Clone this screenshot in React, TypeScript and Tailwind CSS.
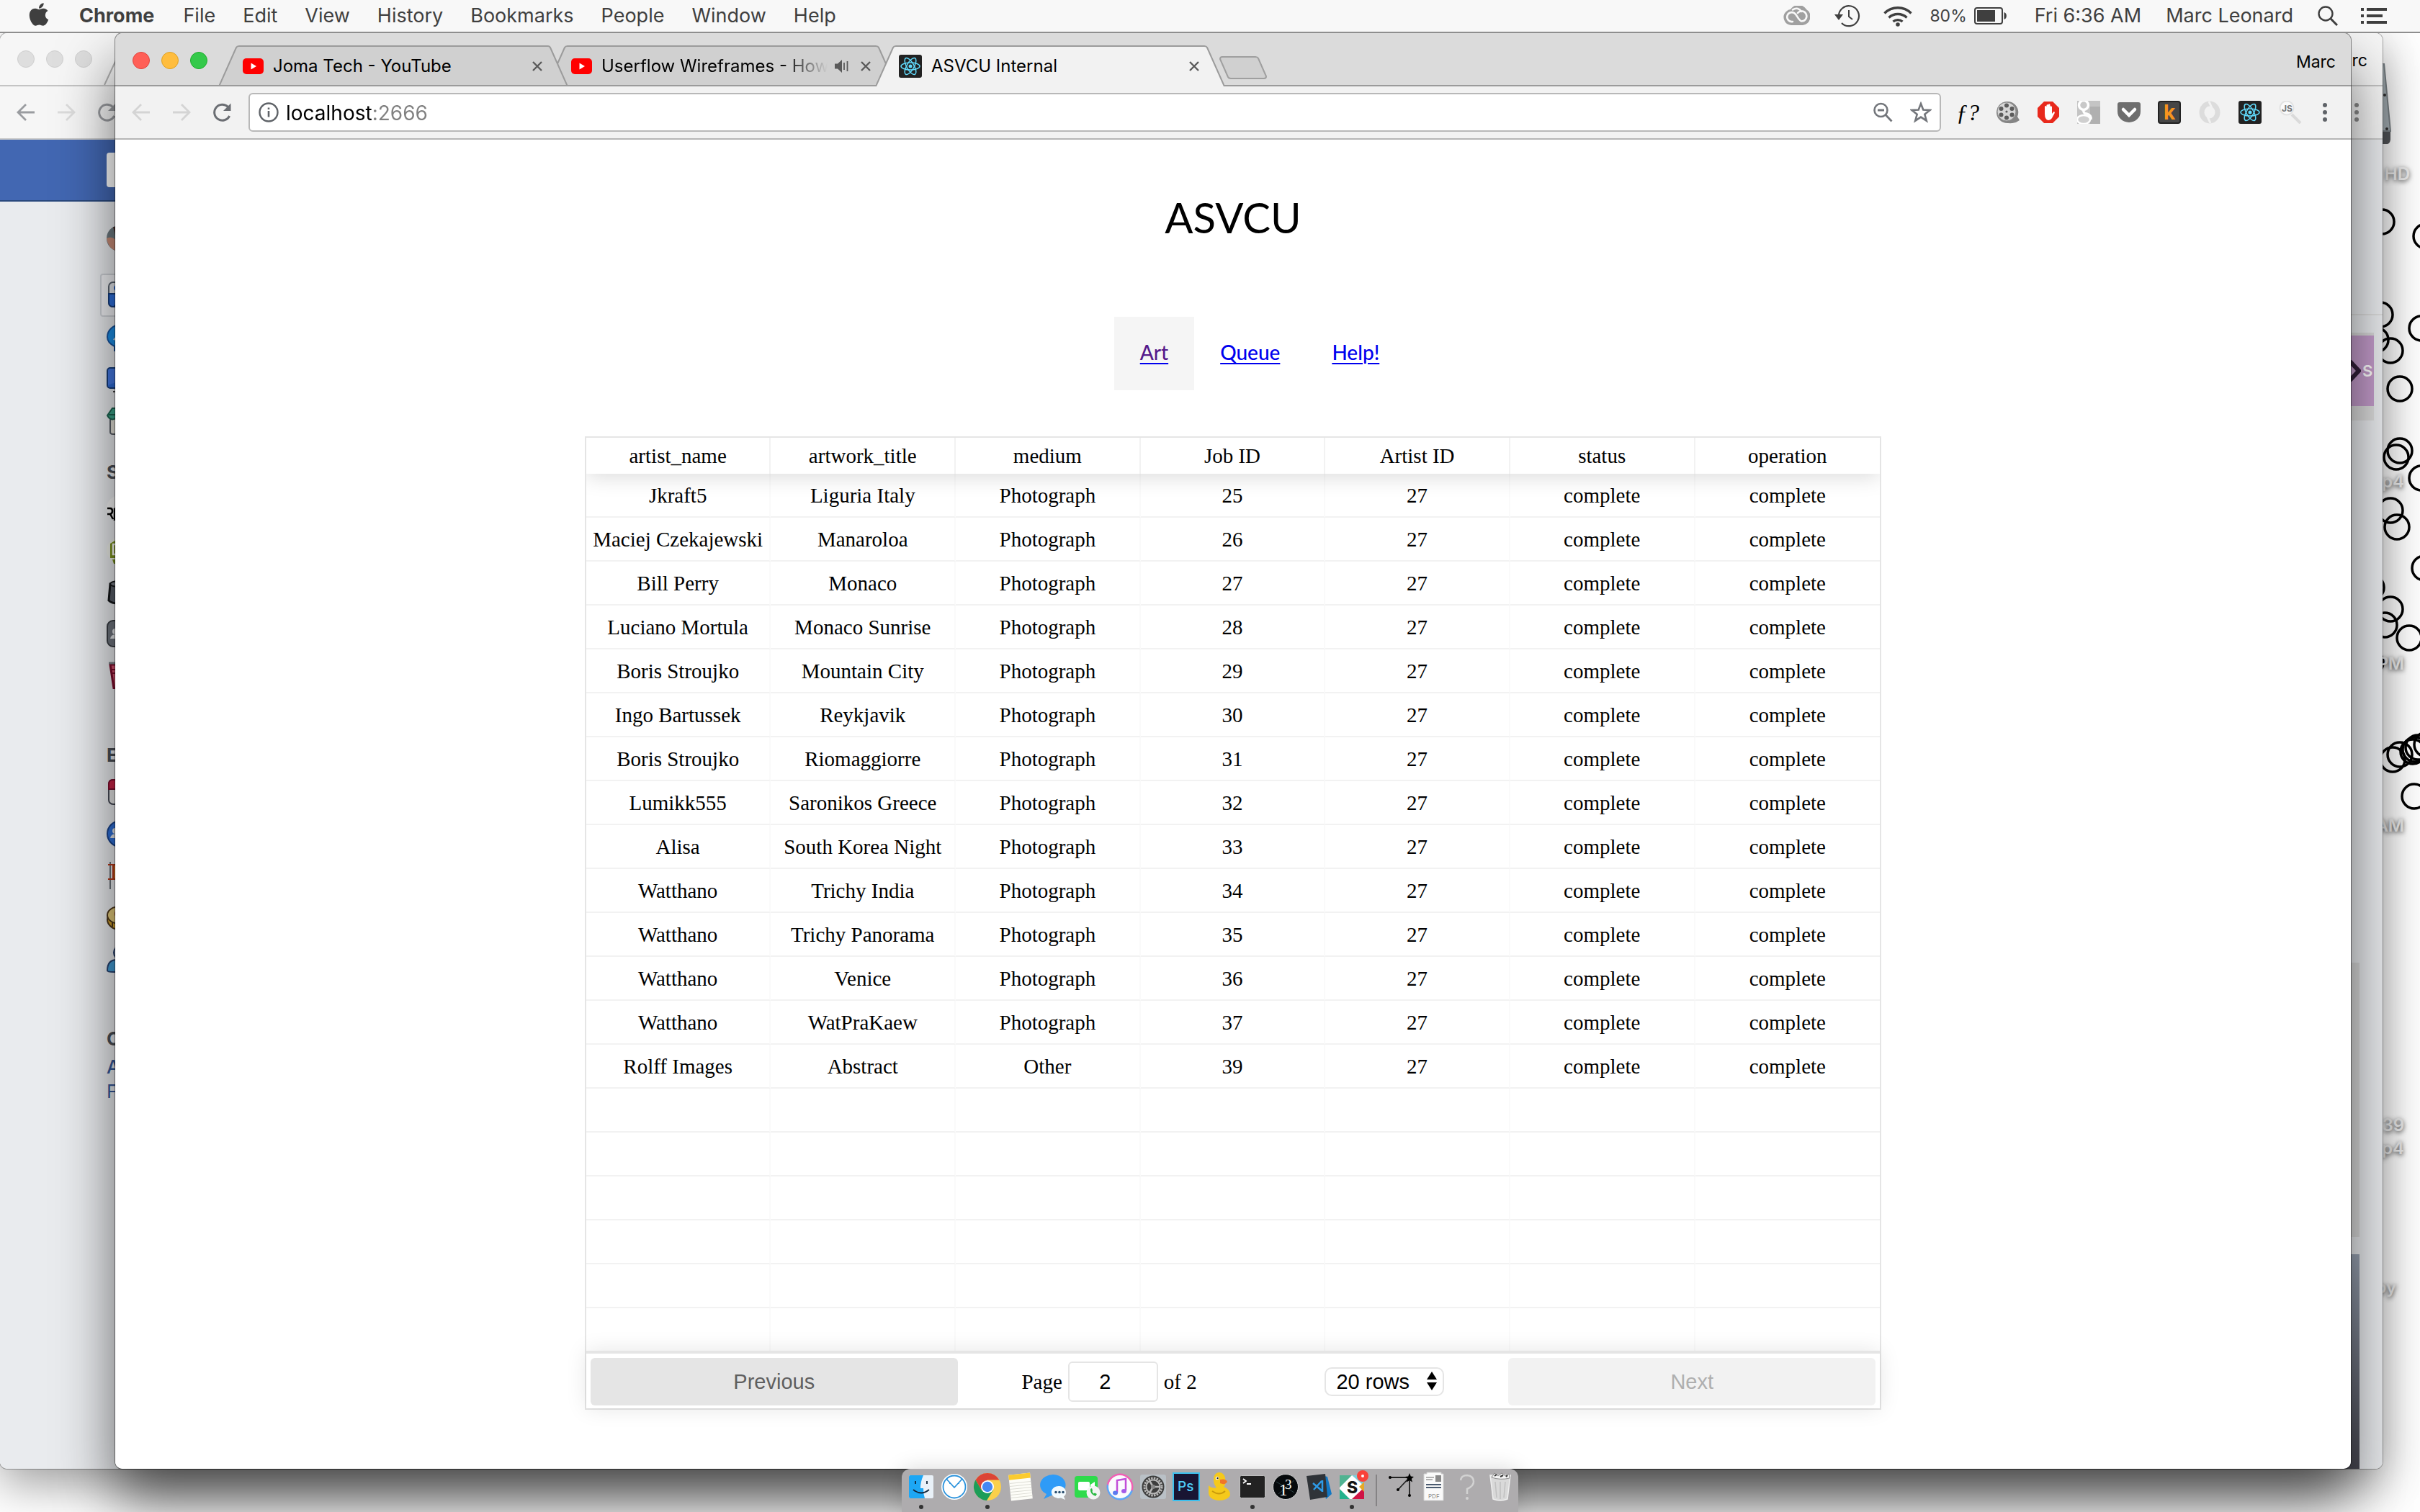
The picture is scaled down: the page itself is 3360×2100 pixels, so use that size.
import React from "react";
import { FaApple } from "react-icons/fa";

/* ---------- shared glyphs ---------- */

function ReactLogo({ className }: { className?: string }) {
  return (
    <svg viewBox="0 0 32 32" className={className} aria-hidden="true">
      <rect width="32" height="32" rx="3" fill="#222" />
      <g fill="none" stroke="#61dafb" strokeWidth="1.5">
        <ellipse cx="16" cy="16" rx="13" ry="5" />
        <ellipse cx="16" cy="16" rx="13" ry="5" transform="rotate(60 16 16)" />
        <ellipse cx="16" cy="16" rx="13" ry="5" transform="rotate(120 16 16)" />
      </g>
      <circle cx="16" cy="16" r="2.5" fill="#61dafb" />
    </svg>
  );
}

function YouTubeLogo({ className }: { className?: string }) {
  return (
    <svg viewBox="0 0 29 22" className={className} aria-hidden="true">
      <rect width="29" height="22" rx="5" fill="#f00" />
      <path d="M11.5 6.5 L19 11 L11.5 15.5 Z" fill="#fff" />
    </svg>
  );
}

function CloseGlyph() {
  return (
    <svg viewBox="0 0 14 14" className="size-3.5" aria-hidden="true">
      <path d="M1 1 L13 13 M13 1 L1 13" stroke="#5a5a5a" strokeWidth="2.4" fill="none" />
    </svg>
  );
}

function ArrowGlyph({ color, flip }: { color: string; flip?: boolean }) {
  return (
    <svg viewBox="0 0 26 26" className={flip ? "size-[26px] rotate-180" : "size-[26px]"} aria-hidden="true">
      <path d="M25 13 H2 M13 2 L2 13 L13 24" stroke={color} strokeWidth="2.8" fill="none" />
    </svg>
  );
}

function ReloadGlyph({ color }: { color: string }) {
  return (
    <svg viewBox="0 0 27 27" className="size-[27px]" aria-hidden="true">
      <path d="M23.6 18 A11 11 0 1 1 21.5 5.5" stroke={color} strokeWidth="3" fill="none" />
      <path d="M25.500 .5 V11 H15 Z" fill={color} />
    </svg>
  );
}

function DotsGlyph({ color }: { color: string }) {
  return (
    <svg viewBox="0 0 6 28" className="h-7 w-1.5" aria-hidden="true">
      <circle cx="3" cy="4" r="3" fill={color} />
      <circle cx="3" cy="14" r="3" fill={color} />
      <circle cx="3" cy="24" r="3" fill={color} />
    </svg>
  );
}

/* ---------- menu bar ---------- */

const menus = ["File", "Edit", "View", "History", "Bookmarks", "People", "Window", "Help"];

function MenuBar() {
  return (
    <header className="absolute inset-x-0 top-0 z-40 flex h-[46px] items-center justify-between border-b-2 border-[#8e8e8e] bg-[#f8f8f8] pl-10 pr-[46px] text-[27px] leading-8 text-[#3f3f3f]">
      <nav className="flex items-center gap-[38px]">
        <FaApple className="-mt-1 mr-1 h-9 w-[28px]" />
        <button className="mr-0.5 font-bold">Chrome</button>
        {menus.map((m) => (
          <button key={m}>{m}</button>
        ))}
      </nav>
      <div className="flex items-center">
        <svg viewBox="0 0 38 28" className="h-7 w-[38px]" aria-label="Creative Cloud">
          <path d="M12 27 A11 11 0 0 1 5 8 Q8 5 11 5 A13 13 0 0 1 33 5 A12 12 0 0 1 28 27 Z" fill="#a0a0a0" />
          <g fill="none" stroke="#f8f8f8" strokeWidth="2.6" strokeLinecap="round">
            <path d="M14 22 A6.500 6.500 0 1 1 16 10 C20 12 21 19 26 21.500 A7 7 0 1 0 21 10" />
            <path d="M14 5.500 C19 2 24 4 26 8" />
          </g>
        </svg>
        <svg viewBox="0 0 36 32" className="ml-[34px] h-8 w-9" aria-label="Time Machine">
          <path d="M6 17 A14 14 0 1 1 10 26" fill="none" stroke="#3f3f3f" strokeWidth="2.200" />
          <path d="M0 14 H12 L6 22 Z" fill="#3f3f3f" />
          <path d="M20 8 V17 L25 21" fill="none" stroke="#3f3f3f" strokeWidth="2" />
        </svg>
        <svg viewBox="0 0 40 29" className="ml-8 h-[29px] w-10" aria-label="Wi-Fi">
          <g fill="none" stroke="#3f3f3f" strokeWidth="3.400">
            <path d="M1.500 10.500 A26 26 0 0 1 38.500 10.500" />
            <path d="M7.500 16.500 A18 18 0 0 1 32.500 16.500" />
            <path d="M13.500 22 A10 10 0 0 1 26.500 22" />
          </g>
          <circle cx="20" cy="26" r="2.800" fill="#3f3f3f" />
        </svg>
        <span className="ml-6 text-[23px]">80%</span>
        <svg viewBox="0 0 46 24" className="ml-2.5 h-6 w-[46px]" aria-label="Battery">
          <rect x="1" y="1" width="38" height="22" rx="3" fill="none" stroke="#3f3f3f" strokeWidth="2" />
          <rect x="4" y="4" width="25" height="16" fill="#3f3f3f" />
          <path d="M41.500 7 C46 8 46 16 41.500 17 Z" fill="#3f3f3f" />
        </svg>
        <span className="ml-[38px]">Fri 6:36 AM</span>
        <span className="ml-[34px]">Marc Leonard</span>
        <svg viewBox="0 0 28 28" className="ml-[34px] size-7" aria-label="Spotlight">
          <circle cx="11" cy="11" r="9.500" fill="none" stroke="#3f3f3f" strokeWidth="2.400" />
          <path d="M17.500 17.500 L27 27" stroke="#3f3f3f" strokeWidth="3" />
        </svg>
        <svg viewBox="0 0 36 22" className="ml-8 h-[22px] w-9" aria-label="Notification Center">
          <path d="M0 2 H4 M8 2 H36 M0 11 H4 M8 11 H30 M0 20 H4 M8 20 H36" stroke="#3f3f3f" strokeWidth="4" />
        </svg>
      </div>
    </header>
  );
}

/* ---------- desktop ---------- */

const rings = [
  [87, 108], [148, 128], [85, 237], [142, 256], [79, 272], [99, 287], [112, 340],
  [107, 435], [112, 426], [142, 464], [99, 509], [108, 532], [146, 589], [73, 616],
  [91, 668], [99, 646], [125, 686], [72, 720], [102, 855], [112, 848], [130, 844],
  [133, 841], [137, 838], [149, 834], [132, 906],
];

function Desktop() {
  return (
    <>
      <svg viewBox="0 0 140 1000" className="absolute right-0 top-[200px] h-[1000px] w-[140px]" aria-hidden="true">
        <g fill="none" stroke="#000" strokeWidth="3.500">
          {rings.map(([x, y]) => (
            <circle key={`${x}-${y}`} cx={x} cy={y} r="17" />
          ))}
        </g>
      </svg>
      <svg viewBox="0 0 60 116" className="absolute right-[40px] top-[88px] h-[116px] w-[60px]" aria-hidden="true">
        <path d="M10 0 H50 L59 94 H1 Z" fill="#a9b3b8" stroke="#7d8589" strokeWidth="2" />
        <path d="M1 95 H59 V106 Q58 112 54 112 H6 Q1 112 1 106 Z" fill="#55585b" />
        <circle cx="51" cy="44" r="2" fill="#333" />
        <circle cx="54" cy="91" r="2" fill="#333" />
      </svg>
      <div className="absolute right-0 top-[222px] text-right text-[24px] font-semibold leading-8 text-[#ebebeb] [text-shadow:0_2px_6px_rgba(0,0,0,0.7)]">
        <p className="absolute right-[14px] top-[4px]">HD</p>
        <p className="absolute right-[22px] top-[431px]">mp4</p>
        <p className="absolute right-[22px] top-[684px]">PM</p>
        <p className="absolute right-[22px] top-[909px]">AM</p>
        <p className="absolute right-[22px] top-[1325px]">39</p>
        <p className="absolute right-[22px] top-[1357px]">mp4</p>
        <p className="absolute right-[33px] top-[1550px]">py</p>
      </div>
    </>
  );
}

/* ---------- window behind ---------- */

const s = { fill: "none", strokeWidth: 2 };

const shortcuts: Record<string, React.ReactNode> = {
  avatar: (
    <>
      <circle cx="18" cy="18" r="18" fill="#6d7a80" />
      <path d="M0 18 Q8 14 14 22 L14 36 Q2 32 0 18Z" fill="#c98d78" />
      <path d="M9 2 H20 V14 H12Z" fill="#4a302c" />
    </>
  ),
  news: (
    <>
      <rect x="3" y="1" width="34" height="34" rx="6" fill="#e4e7ec" stroke="#5b6470" strokeWidth="2" />
      <path d="M3 17 H37 V29 Q37 35 31 35 H9 Q3 35 3 29Z" fill="#2e6fdc" stroke="#173d7c" strokeWidth="2" />
      <circle cx="14" cy="9" r="4" fill="#2e6fdc" />
      <path d="M10 35 L20 26" stroke="#173d7c" strokeWidth="2" />
    </>
  ),
  messenger: (
    <>
      <path d="M20 1 A18 17 0 0 0 1 18 Q1 26 11 31 V37 L18 33 Q37 34 38 18 A18 17 0 0 0 20 1Z" fill="#1b8ee6" stroke="#17539f" strokeWidth="2" />
      <path d="M10 22 L17 14 L22 19 L28 15" stroke="#fff" {...s} />
    </>
  ),
  watch: (
    <>
      <rect x="1" y="3" width="36" height="28" rx="4" fill="#4479e3" stroke="#163c7a" strokeWidth="2" />
      <path d="M2 27 L36 14 V30 H4Z" fill="#2d6bd6" />
      <path d="M9 36 H30" stroke="#444" strokeWidth="2" />
    </>
  ),
  market: (
    <>
      <path d="M5 15 V34 Q5 37 9 37 H34 V15Z" fill="#e5e3da" stroke="#5b6068" strokeWidth="2" />
      <path d="M8 1 H34 L38 11 Q34 18 28 15 Q20 20 14 14 Q6 20 1 11Z" fill="#3ba58a" stroke="#1d6350" strokeWidth="2" />
      <path d="M3 10 H38" stroke="#1d6350" strokeWidth="2" />
    </>
  ),
  brand: (
    <>
      <circle cx="18" cy="19" r="18" fill="#f4f4f4" />
      <path d="M1 19 H5 Q8 19 8 23 Q8 26 5 27 L9 34 M1 27 H5 M11 19 H17 M11 19 V36 M11 27 H16" fill="none" stroke="#000" strokeWidth="2.500" />
    </>
  ),
  campus: (
    <>
      <circle cx="18" cy="19" r="18" fill="#eef0ea" />
      <path d="M5 10 L18 2 V30 H5Z M8 32 H18 V38 H10Z" fill="#7c941f" />
      <path d="M16 11 H9 V25 H16" fill="none" stroke="#fff" strokeWidth="2.500" />
    </>
  ),
  mug: (
    <>
      <path d="M5 8 L3 31 Q8 36 20 35 L32 31 L30 6Z" fill="#595f69" stroke="#16181b" strokeWidth="3" />
      <ellipse cx="17" cy="8" rx="12" ry="4" fill="#777d86" stroke="#16181b" strokeWidth="2" />
    </>
  ),
  people: (
    <>
      <rect x="1" y="1" width="36" height="36" rx="8" fill="#6f757e" stroke="#3a3e44" strokeWidth="2" />
      <circle cx="12" cy="16" r="4" fill="#e6e8eb" />
      <path d="M5 26 Q6 20 13 20 H20 V26Z" fill="#e6e8eb" />
    </>
  ),
  cup: (
    <>
      <path d="M5 4 L10 37 H28 L33 4Z" fill="#d5526e" stroke="#7d0c2c" strokeWidth="3" />
      <path d="M7 11 H31 M8 16 H30" stroke="#7d0c2c" strokeWidth="2" />
      <path d="M3 2 H35" stroke="#7b8087" strokeWidth="3" />
    </>
  ),
  calendar: (
    <>
      <rect x="3" y="2" width="34" height="34" rx="6" fill="#e6e6e6" stroke="#474b57" strokeWidth="2" />
      <path d="M3 15 V8 Q3 2 9 2 H31 Q37 2 37 8 V15Z" fill="#c92347" stroke="#7d0c2c" strokeWidth="2" />
    </>
  ),
  groups: (
    <>
      <circle cx="19" cy="19" r="18" fill="#2f70d8" stroke="#1a438c" strokeWidth="2" />
      <circle cx="12" cy="15" r="4" fill="#e6e8eb" />
      <path d="M5 25 Q6 19 13 19 H20 V25Z" fill="#e6e8eb" />
    </>
  ),
  pages: (
    <>
      <path d="M5 0 V38" stroke="#6d737a" strokeWidth="2" />
      <rect x="9" y="4" width="22" height="20" fill="#e87524" stroke="#b5381a" strokeWidth="2" />
      <path d="M2 4 H34 M2 24 H34" stroke="#b5381a" strokeWidth="2" />
    </>
  ),
  coin: (
    <>
      <ellipse cx="18" cy="22" rx="17" ry="14" fill="#cd9d2a" stroke="#4b3518" strokeWidth="2" />
      <ellipse cx="18" cy="16" rx="17" ry="12" fill="#e3ca7b" stroke="#4b3518" strokeWidth="2" />
      <circle cx="17" cy="14" r="6" fill="#8b1436" />
      <path d="M8 25 V32" stroke="#4b3518" strokeWidth="2" />
    </>
  ),
  friends: (
    <>
      <ellipse cx="18" cy="10" rx="8" ry="9" fill="#b9c8dc" stroke="#26406e" strokeWidth="2" />
      <path d="M1 35 Q1 20 14 20 H24 V37 H10 Q1 37 1 35Z" fill="#429bd4" stroke="#26406e" strokeWidth="2" />
    </>
  ),
};

function Shortcut({ name }: { name: string }) {
  return (
    <li className="flex h-[58px] items-center">
      <svg viewBox="0 0 38 38" className="size-[38px]" aria-hidden="true">
        {shortcuts[name]}
      </svg>
    </li>
  );
}

function BackWindow() {
  return (
    <section className="absolute bottom-[60px] left-0 right-[52px] top-[46px] flex flex-col overflow-hidden rounded-[10px] bg-[#e9ebee]">
      <div className="flex h-[74px] shrink-0 items-center border-b-2 border-[#c4c4c4] bg-[#f6f6f6] pl-6 pr-[21px]">
        <div className="flex gap-4">
          <span className="size-6 rounded-full border border-[#cfcfcf] bg-[#dedede]" />
          <span className="size-6 rounded-full border border-[#cfcfcf] bg-[#dedede]" />
          <span className="size-6 rounded-full border border-[#cfcfcf] bg-[#dedede]" />
        </div>
        <svg viewBox="0 0 30 57" className="ml-4 h-[57px] w-[30px] self-end" aria-hidden="true">
          <path d="M1 57 L27 1" stroke="#b0b0b0" strokeWidth="2" />
        </svg>
        <span className="ml-auto mt-1 text-[23px] leading-8">rc</span>
      </div>
      <div className="flex h-[74px] shrink-0 items-center gap-[30px] border-b-2 border-[#c9c9c9] bg-[#f6f6f6] pl-[23px] pr-[33px]">
        <ArrowGlyph color="#9a9ca0" />
        <ArrowGlyph color="#dcdcdc" flip />
        <ReloadGlyph color="#9a9ca0" />
        <span className="ml-auto">
          <DotsGlyph color="#8a8a8a" />
        </span>
      </div>
      <div className="mr-28 flex h-[86px] shrink-0 items-center border-b-2 border-[#29487d] bg-[#4267b2] pl-[148px]">
        <span className="h-12 w-96 rounded bg-white" />
      </div>
      <div className="flex min-h-0 flex-1 justify-between">
        <ul className="ml-[148px] flex w-80 flex-col pt-[23px]">
          <Shortcut name="avatar" />
          <li className="-ml-[9px] mt-[19px] flex h-[60px] items-center rounded border-2 border-[#cdd0d5] bg-[#f0f1f4] pl-[7px]">
            <svg viewBox="0 0 38 38" className="size-[38px]" aria-hidden="true">
              {shortcuts.news}
            </svg>
          </li>
          <Shortcut name="messenger" />
          <Shortcut name="watch" />
          <Shortcut name="market" />
          <li className="h-[63px] pt-[26px] text-[26px] font-bold leading-8 text-[#4b4f56]">Shortcuts</li>
          <Shortcut name="brand" />
          <Shortcut name="campus" />
          <Shortcut name="mug" />
          <Shortcut name="people" />
          <Shortcut name="cup" />
          <li className="h-[104px] pt-[66px] text-[26px] font-bold leading-8 text-[#4b4f56]">Explore</li>
          <Shortcut name="calendar" />
          <Shortcut name="groups" />
          <Shortcut name="pages" />
          <Shortcut name="coin" />
          <Shortcut name="friends" />
          <li className="h-[104px] pt-[66px] text-[26px] font-bold leading-8 text-[#4b4f56]">Create</li>
          <li className="text-[26px] font-medium leading-[34px] text-[#365899]">Ad</li>
          <li className="text-[26px] leading-[34px] text-[#365899]">Fundraiser</li>
        </ul>
        <div className="flex w-[112px] flex-col">
          <div className="h-[158px] border-b-2 border-[#dcdcdc]" />
          <div className="h-6" />
          <div className="mr-3 flex h-[102px] items-center gap-0.5 border-t-4 border-[#d8d8d8] bg-[#c39bca] pl-[58px]">
            <svg viewBox="0 0 24 30" className="h-[30px] w-6 shrink-0" aria-hidden="true">
              <path d="M8 1 L21 15 L8 29" fill="none" stroke="#33203a" strokeWidth="6" />
            </svg>
            <span className="text-[22px] font-semibold leading-8 text-white">S</span>
          </div>
          <div className="mr-3 h-5 bg-[#dcdcdc]" />
          <div className="mr-8 mt-[753px] h-[381px] bg-[#dadada]" />
          <div className="mr-8 mt-6 flex-1 bg-linear-to-b from-[#9aa4b4] to-[#484852]" />
        </div>
      </div>
    </section>
  );
}

/* ---------- browser window ---------- */

function Tab({
  title,
  icon,
  active,
  audio,
  stack,
}: {
  title: string;
  icon: React.ReactNode;
  active?: boolean;
  audio?: boolean;
  stack: string;
}) {
  return (
    <div className={`relative -mr-7 flex h-[57px] w-[484px] items-center ${stack}`}>
      <svg viewBox="0 0 484 57" preserveAspectRatio="none" className="absolute inset-0 size-full" aria-hidden="true">
        <path d="M0 57 L24 3 Q25 1 28 1 H456 Q459 1 460 3 L484 57 Z" fill={active ? "#f2f2f2" : "#d0d0d0"} />
        <path d="M0 57 L24 3 Q25 1 28 1 H456 Q459 1 460 3 L484 57" fill="none" stroke="#9b9b9b" strokeWidth="2" />
        {!active && <path d="M0 56 H484" stroke="#9b9b9b" strokeWidth="2" />}
      </svg>
      <button className="relative ml-8 flex min-w-0 flex-1 items-center text-left">
        {icon}
        <span
          className={
            audio
              ? "ml-[13px] w-[314px] overflow-hidden whitespace-nowrap bg-linear-to-r from-black from-80% to-transparent bg-clip-text text-[24px] leading-8 text-transparent"
              : "ml-[13px] whitespace-nowrap text-[24px] leading-8 text-black"
          }
        >
          {title}
        </span>
      </button>
      {audio && (
        <svg viewBox="0 0 20 18" className="relative mr-4 h-[18px] w-5 shrink-0" aria-label="Playing audio">
          <path d="M0 5.500 H4 L10 0 V18 L4 12.500 H0 Z" fill="#5a5a5a" />
          <path d="M13 4 V14 M17.500 2 V16" stroke="#5a5a5a" strokeWidth="1.800" />
        </svg>
      )}
      <button className="relative mr-[35px] shrink-0" aria-label={`Close ${title}`}>
        <CloseGlyph />
      </button>
    </div>
  );
}

function TabStrip() {
  return (
    <div className="flex h-[74px] shrink-0 items-end border-b-2 border-[#9b9b9b] bg-[#dbdbdb] pl-6 pr-[21px]">
      <div className="flex gap-4 pb-[22px]">
        <button aria-label="Close window" className="size-6 rounded-full border border-[#e0443e] bg-[#ff5f57]" />
        <button aria-label="Minimise window" className="size-6 rounded-full border border-[#dea123] bg-[#ffbd3e]" />
        <button aria-label="Zoom window" className="size-6 rounded-full border border-[#1dad2b] bg-[#34c94a]" />
      </div>
      <div className="-mb-0.5 ml-4 flex">
        <Tab title="Joma Tech - YouTube" icon={<YouTubeLogo className="ml-px h-[22px] w-[29px] shrink-0" />} stack="z-10" />
        <Tab
          title="Userflow Wireframes - How to"
          icon={<YouTubeLogo className="ml-px h-[22px] w-[29px] shrink-0" />}
          audio
          stack="z-0"
        />
        <Tab title="ASVCU Internal" icon={<ReactLogo className="size-8 shrink-0" />} active stack="z-20" />
      </div>
      <button aria-label="New tab" className="mb-[8px] ml-[21px]">
        <svg viewBox="0 0 66 32" className="h-8 w-[66px]" aria-hidden="true">
          <path d="M4 1 H50 Q53 1 54 3 L65 28 Q65 31 62 31 H16 Q13 31 12 29 L1 4 Q1 1 4 1Z" fill="#d0d0d0" stroke="#9f9f9f" strokeWidth="2" />
        </svg>
      </button>
      <button className="mb-4 ml-auto text-[23px] leading-8">Marc</button>
    </div>
  );
}

function Extensions() {
  return (
    <div className="flex items-center gap-6">
      <button aria-label="Font finder" className="w-8 whitespace-nowrap font-['Liberation_Serif',serif] text-[32px] font-medium italic leading-8">
        ƒ?
      </button>
      <svg viewBox="0 0 32 32" className="size-8" aria-label="Film reel">
        <path d="M14 1 A15 15 0 0 1 29 22 L32 27 Q26 32 16 31 A15 15 0 0 1 14 1Z" fill="#858585" />
        <circle cx="14" cy="15" r="13" fill="#d6d6d6" stroke="#8b8b8b" />
        <g fill="#5c5c5c">
          <circle cx="14" cy="6.500" r="3" /><circle cx="21.500" cy="11" r="3" /><circle cx="21.500" cy="19.500" r="3" />
          <circle cx="14" cy="23.500" r="3" /><circle cx="6.500" cy="19.500" r="3" /><circle cx="6.500" cy="11" r="3" />
          <circle cx="14" cy="15" r="1.600" />
        </g>
      </svg>
      <svg viewBox="0 0 32 32" className="size-8" aria-label="Ad blocker">
        <path d="M10 1 H22 L31 10 V22 L22 31 H10 L1 22 V10Z" fill="#e8291c" />
        <path d="M11 18 V8 Q12.300 6 13.500 8 V14 V6 Q14.800 4 16 6 V14 V5 Q17.300 3.500 18.500 5.500 V14 V8 Q19.800 6.500 21 8.500 V18 L23.500 15 Q25.500 15 24.500 17.500 L21 24 Q19 27 15.500 27 Q11 26 11 18Z" fill="#fff" />
      </svg>
      <svg viewBox="0 0 32 32" className="size-8" aria-label="Search assistant">
        <rect width="32" height="32" fill="#c4c4c4" />
        <path d="M18 8 H32 V32 H18Z" fill="#b0b0b0" />
        <circle cx="9" cy="6" r="6.500" fill="#c9c9c9" stroke="#fff" strokeWidth="3.500" />
        <path d="M9 13 Q8 17 13 18 Q20 20 19 26" stroke="#fff" strokeWidth="3.500" fill="none" />
        <ellipse cx="9" cy="26" rx="9" ry="6" fill="#cfcfcf" stroke="#fff" strokeWidth="2.500" />
      </svg>
      <svg viewBox="0 0 32 32" className="size-8" aria-label="Pocket">
        <path d="M3 2 H29 Q32 2 32 5 V15 A16 15 0 0 1 0 15 V5 Q0 2 3 2Z" fill="#6e6e6e" />
        <path d="M8 12 L16 20 L24 12" fill="none" stroke="#fff" strokeWidth="4.500" strokeLinecap="round" />
      </svg>
      <button aria-label="k extension" className="size-8 rounded border-2 border-[#222] bg-[#464646] text-[28px] font-bold leading-7 text-[#f7941e]">
        k
      </button>
      <svg viewBox="0 0 32 32" className="size-8" aria-label="Sync">
        <ellipse cx="16" cy="16" rx="11" ry="12" fill="none" stroke="#dcdcdc" strokeWidth="7" />
        <path d="M15 1 L19 10 M13 22 L17 31" stroke="#f2f2f2" strokeWidth="3" />
      </svg>
      <ReactLogo className="size-8" />
      <svg viewBox="0 0 32 32" className="size-8" aria-label="JS inspector">
        <circle cx="11" cy="10" r="9.500" fill="#fafafa" stroke="#e2e2e2" strokeWidth="2" />
        <path d="M18 19 L30 31" stroke="#dadada" strokeWidth="4" />
        <text x="4" y="15" fontSize="12" fontWeight="700" fill="#777">JS</text>
      </svg>
      <button aria-label="Browser menu" className="flex w-4 justify-center">
        <DotsGlyph color="#5f6368" />
      </button>
    </div>
  );
}

function Toolbar() {
  return (
    <div className="flex h-[74px] shrink-0 items-center border-b-2 border-[#b6b6b6] bg-[#f2f2f2] pl-[23px] pr-7">
      <div className="flex items-center gap-[30px]">
        <button aria-label="Back"><ArrowGlyph color="#d4d4d4" /></button>
        <button aria-label="Forward"><ArrowGlyph color="#d4d4d4" flip /></button>
        <button aria-label="Reload"><ReloadGlyph color="#6b6e73" /></button>
      </div>
      <div className="ml-[23px] mr-[21px] flex h-[54px] flex-1 items-center rounded-md border-2 border-[#b8b8b8] bg-white pl-3 pr-[11px]">
        <svg viewBox="0 0 28 28" className="size-7" aria-label="Site information">
          <circle cx="14" cy="14" r="12.500" fill="none" stroke="#5f6368" strokeWidth="2.400" />
          <path d="M14 12 V20.500 M14 7.500 V10" stroke="#5f6368" strokeWidth="2.600" />
        </svg>
        <input
          aria-label="Address"
          defaultValue="localhost:2666"
          className="ml-2.5 min-w-0 flex-1 bg-[linear-gradient(to_right,#000_122px,#808080_122px)] bg-clip-text pt-0.5 text-[28px] leading-9 text-transparent outline-none"
        />
        <button aria-label="Zoom level">
          <svg viewBox="0 0 28 28" className="size-7" aria-hidden="true">
            <circle cx="11.500" cy="11" r="9" fill="none" stroke="#73767b" strokeWidth="2.600" />
            <path d="M7 11 H16 M18 17.500 L26.500 26.500" stroke="#73767b" strokeWidth="2.800" />
          </svg>
        </button>
        <button aria-label="Bookmark this page" className="ml-6">
          <svg viewBox="0 0 30 30" className="size-[30px]" aria-hidden="true">
            <path d="M15 3 L18.300 11.500 L27.500 12 L20.300 17.800 L22.800 26.700 L15 21.600 L7.200 26.700 L9.700 17.800 L2.500 12 L11.700 11.500Z" fill="none" stroke="#73767b" strokeWidth="2.600" />
          </svg>
        </button>
      </div>
      <Extensions />
    </div>
  );
}

/* ---------- page ---------- */

const columns = ["artist_name", "artwork_title", "medium", "Job ID", "Artist ID", "status", "operation"];

const artworks: [string, string, string, number][] = [
  ["Jkraft5", "Liguria Italy", "Photograph", 25],
  ["Maciej Czekajewski", "Manaroloa", "Photograph", 26],
  ["Bill Perry", "Monaco", "Photograph", 27],
  ["Luciano Mortula", "Monaco Sunrise", "Photograph", 28],
  ["Boris Stroujko", "Mountain City", "Photograph", 29],
  ["Ingo Bartussek", "Reykjavik", "Photograph", 30],
  ["Boris Stroujko", "Riomaggiorre", "Photograph", 31],
  ["Lumikk555", "Saronikos Greece", "Photograph", 32],
  ["Alisa", "South Korea Night", "Photograph", 33],
  ["Watthano", "Trichy India", "Photograph", 34],
  ["Watthano", "Trichy Panorama", "Photograph", 35],
  ["Watthano", "Venice", "Photograph", 36],
  ["Watthano", "WatPraKaew", "Photograph", 37],
  ["Rolff Images", "Abstract", "Other", 39],
];

const rows: (string | number)[][] = [
  ...artworks.map((a) => [...a, 27, "complete", "complete"]),
  ...Array.from({ length: 6 }, () => columns.map(() => "")),
];

function ArtTable() {
  return (
    <div className="mt-16 w-[58%] border-2 border-[#e5e5e5] font-['Liberation_Serif',serif] text-[29px] leading-8 text-black">
      <table className="w-full table-fixed border-separate border-spacing-0">
        <thead className="relative shadow-[0_4px_30px_rgba(0,0,0,0.15)] [clip-path:inset(0_0_-40px_0)]">
          <tr>
            {columns.map((c) => (
              <th key={c} className="h-[50px] border-r-2 border-[#f2f2f2] p-0 text-center font-normal last:border-r-0">
                {c}
              </th>
            ))}
          </tr>
        </thead>
        <tbody>
          {rows.map((r, i) => (
            <tr key={i} className="group">
              {r.map((v, j) => (
                <td
                  key={j}
                  className="h-[61px] whitespace-nowrap border-b-2 border-r-2 border-b-[#f2f2f2] border-r-[#fafafa] p-0 text-center last:border-r-0 group-last:h-[59px] group-last:border-b-0"
                >
                  {v}
                </td>
              ))}
            </tr>
          ))}
        </tbody>
      </table>
      <div className="relative flex items-center border-t-4 border-[#e5e5e5] bg-white px-1.5 pb-1 pt-1.5 shadow-[0_0_30px_rgba(0,0,0,0.1)]">
        <button className="h-[66px] flex-1 rounded-md bg-[#e5e5e5] font-['Liberation_Sans',sans-serif] text-[#5f5f5f]">
          Previous
        </button>
        <div className="flex flex-[1.5] items-center justify-around">
          <label className="flex items-center gap-2">
            Page
            <input
              defaultValue="2"
              className="h-14 w-[125px] rounded-md border-2 border-[#e5e5e5] pr-[22px] text-center font-['Liberation_Sans',sans-serif]"
            />
            of 2
          </label>
          <div className="relative">
            <select
              aria-label="Rows per page"
              className="h-10 w-[166px] appearance-none rounded-[10px] border-2 border-[#e5e5e5] bg-white pl-3.5 font-['Liberation_Sans',sans-serif] leading-8"
            >
              <option>20 rows</option>
            </select>
            <svg viewBox="0 0 14 26" className="pointer-events-none absolute right-2.5 top-[6px] h-[26px] w-3.5" aria-hidden="true">
              <path d="M7 0 L14 11 H0Z M7 26 L14 15 H0Z" fill="#000" />
            </svg>
          </div>
        </div>
        <button disabled className="h-[66px] flex-1 rounded-md bg-[#f2f2f2] font-['Liberation_Sans',sans-serif] text-[#afafaf]">
          Next
        </button>
      </div>
    </div>
  );
}

function FrontWindow() {
  return (
    <section className="absolute bottom-[60px] left-[160px] right-[96px] top-[46px] flex flex-col overflow-hidden rounded-[10px]">
      <TabStrip />
      <Toolbar />
      <main className="flex flex-1 flex-col items-center bg-white">
        <h1 className="mt-[76px] font-['Lato',sans-serif] text-[58px] leading-16 text-black">ASVCU</h1>
        <nav className="mt-[106px] pl-[74px] font-['Lato',sans-serif] text-[28px] font-medium">
          <ul className="flex leading-[98px] text-[#0000ee] underline decoration-2 underline-offset-4">
            <li className="bg-[#f5f5f5] px-9 pb-1"><a href="#art" className="text-[#551a8b]">Art</a></li>
            <li className="px-9"><a href="#queue">Queue</a></li>
            <li className="px-9"><a href="#help">Help!</a></li>
          </ul>
        </nav>
        <ArtTable />
      </main>
    </section>
  );
}

/* ---------- dock ---------- */

function DockItem({ label, running, badge, children }: { label: string; running?: boolean; badge?: boolean; children: React.ReactNode }) {
  return (
    <button aria-label={label} className="relative flex h-[60px] w-[46px] flex-col items-center pt-1">
      <svg viewBox="0 0 40 42" className="h-[42px] w-10 shrink-0" aria-hidden="true">
        {children}
      </svg>
      {running && <span className="mt-1 size-1.5 rounded-full bg-[#333]" />}
      {badge && (
        <span className="absolute right-0 top-0.5 flex size-4 items-center justify-center rounded-full bg-[#f9423a]">
          <span className="size-1 rounded-full bg-white" />
        </span>
      )}
    </button>
  );
}

function Dock() {
  return (
    <footer className="absolute bottom-0 left-1/2 z-30 flex h-[60px] -translate-x-1/2 items-start rounded-t-xl bg-[#aeacae] pl-1 pr-0.5 shadow-[0_0_30px_rgba(0,0,0,0.15)]">
      <DockItem label="Finder" running>
        <rect x="3" y="5" width="34" height="32" rx="2" fill="#e9f1f8" />
        <path d="M5 5 H23 Q19 14 19 23 H23 Q23 31 25 37 H5 Q3 37 3 35 V7 Q3 5 5 5Z" fill="#1da7f5" />
        <path d="M12 13 V17 M28 13 V17 M9 25 Q20 34 31 25" fill="none" stroke="#12263a" strokeWidth="1.800" />
      </DockItem>
      <DockItem label="Mail">
        <circle cx="20" cy="21" r="18" fill="#fff" />
        <circle cx="20" cy="21" r="15.500" fill="none" stroke="#2a92dc" strokeWidth="1.800" />
        <path d="M9 10 L20 22 L31 10 M14 16 V17 M26 16 V17" fill="none" stroke="#2a92dc" strokeWidth="1.800" />
      </DockItem>
      <DockItem label="Chrome" running>
        <circle cx="20" cy="21" r="19" fill="#fbd04b" />
        <path d="M3.500 11.500 A19 19 0 0 1 36.500 11.500 H20 L12 26Z" fill="#dc4437" />
        <path d="M3.500 11.500 A19 19 0 0 0 19 40 L28 25.500 L12 26Z" fill="#1c9d58" />
        <circle cx="20" cy="21" r="9" fill="#fff" />
        <circle cx="20" cy="21" r="7.200" fill="#4587f3" />
      </DockItem>
      <DockItem label="Notes">
        <g transform="rotate(-6 20 21)">
          <rect x="5" y="3" width="30" height="36" fill="#fdfdf8" />
          <rect x="5" y="3" width="30" height="7" fill="#fbcb2f" />
          <path d="M5 15 H35 M5 19 H35 M5 23 H35 M5 27 H35 M5 31 H35 M5 35 H35" stroke="#dcdcd4" />
        </g>
      </DockItem>
      <DockItem label="Messages">
        <path d="M20 4 A18 14.500 0 0 0 10 31 L6 38 L17 33 A18 14.500 0 1 0 20 4Z" fill="#2f9bf7" />
        <path d="M28 20 A10 8.500 0 1 0 30 36.500 L36 39 L34 34.500 A10 8.500 0 0 0 28 20Z" fill="#f3fafe" />
        <circle cx="23" cy="28.500" r="1.800" fill="#2a4f70" /><circle cx="28" cy="28.500" r="1.800" fill="#2a4f70" /><circle cx="33" cy="28.500" r="1.800" fill="#2a4f70" />
      </DockItem>
      <DockItem label="FaceTime">
        <rect x="3" y="6" width="32" height="30" rx="4" fill="#2edb4b" />
        <rect x="8" y="14" width="16" height="12" rx="2" fill="#fff" />
        <path d="M25 18 L31 14 V25 L25 22Z" fill="#fff" />
        <circle cx="29" cy="29" r="9.500" fill="#f4f4f4" />
        <path d="M25 24 Q24 31 32 34 L34 31 L31 29.500 L29.500 30.500 Q27.500 29 27.500 27 L28 26 L27 23Z" fill="#2ab943" />
      </DockItem>
      <DockItem label="iTunes">
        <circle cx="20" cy="21" r="18.500" fill="#f15fb4" />
        <path d="M20 39.500 A18.500 18.500 0 0 1 2 17 Q10 30 38 26 A18.500 18.500 0 0 1 20 39.500Z" fill="#5ba9f5" />
        <circle cx="20" cy="21" r="16" fill="#fbfbfd" />
        <path d="M16 29 V12 L28 10 V26" fill="none" stroke="#c14ed8" strokeWidth="2.500" />
        <ellipse cx="13.500" cy="29.500" rx="3.500" ry="3" fill="#5a7bf0" /><ellipse cx="25.500" cy="27" rx="3.500" ry="3" fill="#a35be8" />
      </DockItem>
      <DockItem label="System Preferences">
        <rect x="2" y="4" width="36" height="34" rx="3" fill="#b9c0c6" />
        <circle cx="20" cy="21" r="15.500" fill="#3d3d3d" />
        <circle cx="20" cy="21" r="12" fill="none" stroke="#b8b8b8" strokeWidth="3" strokeDasharray="2.500 1.300" />
        <circle cx="20" cy="21" r="9.500" fill="none" stroke="#b8b8b8" strokeWidth="2" />
        <path d="M20 21 H30 M20 21 L15 12.500 M20 21 L15 29.500" stroke="#b8b8b8" strokeWidth="2.500" />
        <circle cx="20" cy="21" r="3" fill="#888" />
      </DockItem>
      <DockItem label="Photoshop">
        <rect x="2" y="2" width="36" height="38" fill="#191533" stroke="#3cc0ee" strokeWidth="2" />
        <text x="8" y="27" fontSize="19" fontWeight="500" fill="#4fcdf8">Ps</text>
      </DockItem>
      <DockItem label="Cyberduck">
        <path d="M5 19 Q10 24 16 22 Q12 18 12 11 A8 9 0 0 1 28 9 Q30 17 26 21 Q36 25 35 33 Q31 40 20 40 Q6 39 5 30Z" fill="#f5c91b" />
        <path d="M21 11 Q29 9 31 14 Q28 19 21 16Z" fill="#f0762a" />
        <circle cx="17" cy="9" r="2.300" fill="#fff" /><circle cx="17.500" cy="9" r="1.200" fill="#222" />
        <path d="M10 27 Q20 34 28 27" fill="none" stroke="#c99a0c" strokeWidth="1.800" />
      </DockItem>
      <DockItem label="Terminal" running>
        <rect x="2.500" y="5.500" width="35" height="31" rx="2" fill="#222" stroke="#c0c0c0" />
        <path d="M7 10 L11 13 L7 16 M12 17 H18" fill="none" stroke="#fff" strokeWidth="1.800" />
      </DockItem>
      <DockItem label="1Three">
        <circle cx="20" cy="21" r="17.500" fill="#060a0c" stroke="#d5d5d5" />
        <path d="M7 14 L32 29 M32 12 L10 31" stroke="#375053" strokeWidth=".8" />
        <text x="11" y="33" fontSize="23" fill="#fff" fontFamily="Liberation Serif">1</text>
        <text x="19" y="24" fontSize="19" fill="#fff" fontFamily="Liberation Serif">3</text>
      </DockItem>
      <DockItem label="Code editor">
        <path d="M24 5 L32 7 L38 31 L30 38Z" fill="#1277c4" />
        <path d="M3 6 L29 3 L32 35 L8 39Z" fill="#2f3338" />
        <path d="M24 13 L13 25 M12 16 L25 27 M25 12 V28" fill="none" stroke="#2e9be8" strokeWidth="2.500" />
      </DockItem>
      <DockItem label="Slack" running badge>
        <rect x="3" y="5" width="34" height="33" rx="3" fill="#fff" />
        <path d="M3 5 H20 L3 22Z" fill="#51b391" />
        <path d="M20 5 H37 V20Z" fill="#7fcdd9" />
        <path d="M37 22 V38 H20Z" fill="#cf1446" />
        <path d="M3 24 L17 38 H3Z" fill="#25b28c" />
        <path d="M37 14 V28 L30 21Z" fill="#e6a928" />
        <text x="13" y="30" fontSize="23" fontWeight="800" fill="#151515">S</text>
      </DockItem>
      <span className="mx-2.5 mt-2 h-11 w-0.5 bg-[#858385]" />
      <DockItem label="Automation">
        <path d="M5 8 H32 M32 8 L16 25 M32 8 V33" stroke="#222" strokeWidth="1.800" />
        <circle cx="5" cy="8" r="2" /><circle cx="16" cy="25" r="2" /><circle cx="32" cy="33" r="2" />
        <path d="M32 2 L33.800 6.500 L38 7 L34.800 10 L36 14.500 L32 12 L28 14.500 L29.200 10 L26 7 L30.200 6.500Z" />
      </DockItem>
      <DockItem label="PDF document">
        <path d="M10 1 H30 V3 H33 V40 H6 V3 H10Z" fill="#fafafa" stroke="#d0d0d0" />
        <path d="M9 8 H20 M9 11 H18" stroke="#9a9a9a" strokeWidth="1.500" />
        <path d="M9 18 H30 M9 22 H30" stroke="#4b5b70" strokeWidth="2" />
        <rect x="22" y="5" width="8" height="9" fill="#8a8a8a" />
        <text x="12" y="37" fontSize="8" fill="#8a8a8a">PDF</text>
      </DockItem>
      <DockItem label="Unknown item">
        <path d="M11 12 Q12 5 20 5 Q29 6 29 14 Q29 20 20 24 V31" fill="none" stroke="#d2d2d2" strokeWidth="2.500" />
        <circle cx="20" cy="37" r="2" fill="#d2d2d2" />
      </DockItem>
      <DockItem label="Trash">
        <path d="M6 5 H34 L30 38 Q20 42 10 38Z" fill="#d9d9d9" stroke="#efefef" strokeWidth="1.500" />
        <path d="M8 8 L12 2 L17 6 L22 2 L27 6 L32 3 L33 9 Q20 12 8 8Z" fill="#f4f4f4" stroke="#777" strokeWidth=".8" />
        <path d="M12 6 L15 4 M20 7 L24 5 M28 7 L30 5" stroke="#333" strokeWidth="2" />
        <path d="M13 14 L15 36 M20 14 V38 M27 14 L25 36" stroke="#c0c0c0" strokeWidth="1.500" />
      </DockItem>
    </footer>
  );
}

export default function App() {
  return (
    <div className="relative h-screen w-full overflow-hidden bg-white font-['Inter',sans-serif] text-black">
      <MenuBar />
      <Desktop />
      <div className="absolute bottom-[60px] left-0 right-[52px] top-[46px] rounded-[10px] shadow-[0_0_0_1px_rgba(0,0,0,0.3),0_20px_66px_rgba(0,0,0,0.4)]" />
      <BackWindow />
      <div className="absolute bottom-[60px] left-[160px] right-[96px] top-[46px] rounded-[10px] shadow-[0_0_0_1px_rgba(0,0,0,0.45),0_44px_80px_rgba(0,0,0,0.58)]" />
      <FrontWindow />
      <Dock />
    </div>
  );
}
